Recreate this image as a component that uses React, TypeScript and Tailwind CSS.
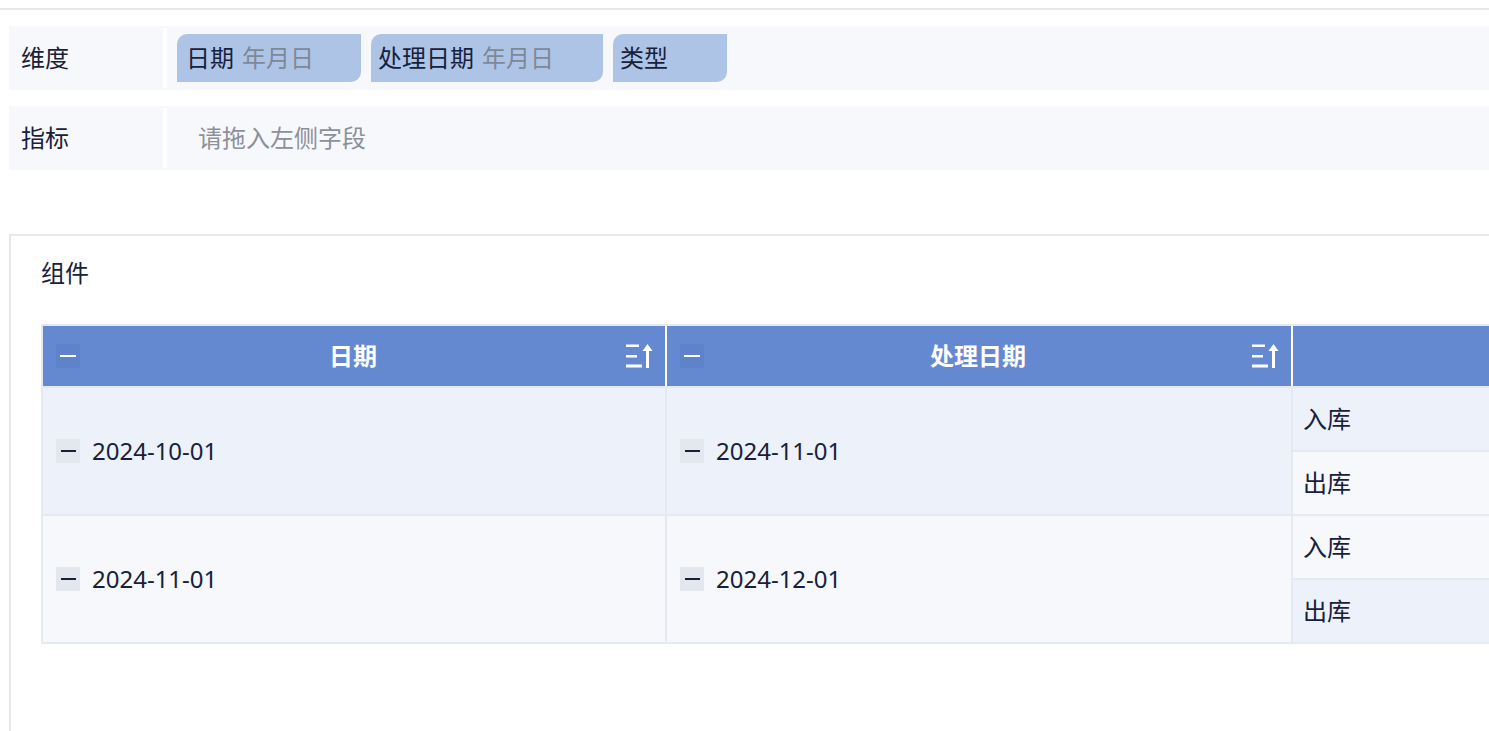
import React from "react";

const font = { fontFamily: '"Noto Sans", "Noto Sans CJK SC", sans-serif' };

function SortIcon() {
  return (
    <svg width="27" height="24" viewBox="0 0 27 24" fill="white">
      <rect x="0" y="0.5" width="13" height="2.5" />
      <rect x="0" y="11" width="11" height="2.5" />
      <rect x="0" y="20.5" width="16" height="3" />
      <polygon points="16.5,7 21.5,0 26.5,7" />
      <rect x="20" y="6" width="3" height="18" />
    </svg>
  );
}

function HeaderMinus() {
  return (
    <div className="w-[24px] h-[24px] bg-[#5e83cb] flex items-center justify-center shrink-0">
      <div className="w-[16px] h-[2px] bg-white" />
    </div>
  );
}

function BodyMinus() {
  return (
    <div className="w-[24px] h-[24px] bg-[#e3e8ef] flex items-center justify-center shrink-0">
      <div className="w-[15px] h-[2px] bg-[#17213b]" />
    </div>
  );
}

function HeaderCell({ title, w }: { title: string; w: string }) {
  return (
    <div className={`${w} flex items-center pl-[13px] pr-[12px] border-r-2 border-white`}>
      <HeaderMinus />
      <div className="flex-1 text-center font-bold">{title}</div>
      <SortIcon />
    </div>
  );
}

function DateCell({ value, w }: { value: string; w: string }) {
  return (
    <div className={`${w} flex items-center pl-[13px] gap-[12px] border-r-2 border-[#e4e9f2]`}>
      <BodyMinus />
      <span>{value}</span>
    </div>
  );
}

export default function App() {
  const rows = [
    { d1: "2024-10-01", d2: "2024-11-01", bg: "bg-[#edf2fa]", s1: "bg-[#edf2fa]", s2: "bg-[#f6f8fc]" },
    { d1: "2024-11-01", d2: "2024-12-01", bg: "bg-[#f6f8fc]", s1: "bg-[#f6f8fc]", s2: "bg-[#edf2fa]" },
  ];
  return (
    <div
      className="w-[1489px] h-[731px] overflow-hidden bg-white text-[24px] text-[#17213b]"
      style={font}
    >
      <div className="h-[8px]" />
      <div className="h-[2px] bg-[#e4e7ec]" />
      <div className="pl-[9px] pt-[16px]">
        <div className="flex h-[64px] bg-[#f7f8fc]">
          <div className="w-[154px] flex items-center pl-[12px]">维度</div>
          <div className="w-[4px] bg-white my-[2px]" />
          <div className="flex-1 flex items-center gap-[10px] pl-[10px]">
            <div className="w-[184px] h-[48px] bg-[#aec4e7] rounded-tl-[10px] rounded-br-[10px] flex items-center pl-[9px]">
              <span>日期</span>
              <span className="ml-[8px] text-[#7d8899]">年月日</span>
            </div>
            <div className="w-[232px] h-[48px] bg-[#aec4e7] rounded-tl-[10px] rounded-br-[10px] flex items-center pl-[7px]">
              <span>处理日期</span>
              <span className="ml-[8px] text-[#7d8899]">年月日</span>
            </div>
            <div className="w-[114px] h-[48px] bg-[#aec4e7] rounded-tl-[10px] rounded-br-[10px] flex items-center pl-[7px]">
              <span>类型</span>
            </div>
          </div>
        </div>
        <div className="h-[16px]" />
        <div className="flex h-[64px] bg-[#f7f8fc]">
          <div className="w-[154px] flex items-center pl-[12px]">指标</div>
          <div className="w-[4px] bg-white my-[2px]" />
          <div className="flex-1 flex items-center pl-[31px] text-[#8c9099]">请拖入左侧字段</div>
        </div>
        <div className="h-[64px]" />
        <div className="w-[1600px] h-[600px] border-l-2 border-t-2 border-[#e5e8ef] pt-[19px] pl-[30px]">
          <div className="h-[36px] leading-[36px]">组件</div>
          <div className="mt-[33px] w-[1600px] border-2 border-[#e4e9f2]">
            <div className="flex h-[62px] bg-[#6589d0] text-white border-b-2 border-[#e4e9f2]">
              <HeaderCell title="日期" w="w-[624px]" />
              <HeaderCell title="处理日期" w="w-[626px]" />
              <div className="flex-1" />
            </div>
            {rows.map((r, i) => (
              <div
                key={i}
                className={`flex ${r.bg} ${i === 0 ? "h-[128px] border-b-2 border-[#e4e9f2]" : "h-[126px]"}`}
              >
                <DateCell value={r.d1} w="w-[624px]" />
                <DateCell value={r.d2} w="w-[626px]" />
                <div className="flex-1 flex flex-col">
                  <div className={`h-[62px] flex items-center pl-[10px] ${r.s1}`}>入库</div>
                  <div className="h-[2px] bg-[#e4e9f2]" />
                  <div className={`h-[62px] flex items-center pl-[10px] ${r.s2}`}>出库</div>
                </div>
              </div>
            ))}
          </div>
        </div>
      </div>
    </div>
  );
}
